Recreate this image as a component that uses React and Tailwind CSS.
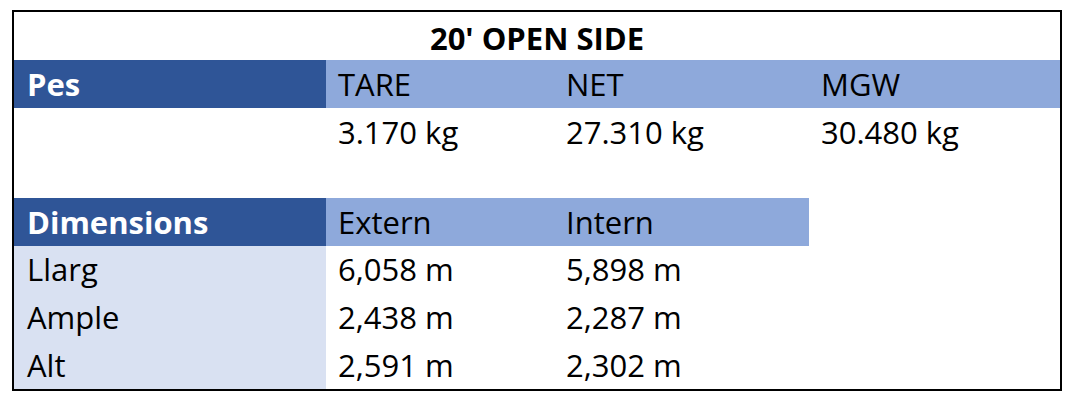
import React from 'react';

const font = { fontFamily: '"Open Sans", "Liberation Sans", sans-serif' };

const dims = [
  { label: 'Llarg', ext: '6,058 m', int: '5,898 m', h: 'h-[47px]' },
  { label: 'Ample', ext: '2,438 m', int: '2,287 m', h: 'h-[48px]' },
  { label: 'Alt', ext: '2,591 m', int: '2,302 m', h: 'h-[48px]' },
];

const Cell = ({ className = '', children }) => (
  <div className={`flex items-end pb-[8px] pl-[12px] text-[31px] leading-none text-black ${className}`}>
    {children}
  </div>
);

export default function App() {
  return (
    <div className="min-h-screen bg-white pt-[10px] pl-[12px]" style={font}>
      <div className="w-[1050px] border-2 border-black">
        <div className="flex h-[48px] items-end justify-center pb-[6px] text-[31px] font-bold leading-none text-black">
          20' OPEN SIDE
        </div>

        <div className="grid h-[48px] grid-cols-[312px_228px_255px_251px]">
          <Cell className="bg-[#2f5597] font-bold text-white pl-[13px]">Pes</Cell>
          <Cell className="bg-[#8ea9db]">TARE</Cell>
          <Cell className="bg-[#8ea9db]">NET</Cell>
          <Cell className="bg-[#8ea9db]">MGW</Cell>
        </div>

        <div className="grid h-[48px] grid-cols-[312px_228px_255px_251px]">
          <Cell />
          <Cell>3.170 kg</Cell>
          <Cell>27.310 kg</Cell>
          <Cell>30.480 kg</Cell>
        </div>

        <div className="h-[42px]" />

        <div className="grid h-[48px] grid-cols-[312px_228px_255px_251px]">
          <Cell className="bg-[#2f5597] font-bold text-white pl-[13px]">Dimensions</Cell>
          <Cell className="bg-[#8ea9db]">Extern</Cell>
          <Cell className="bg-[#8ea9db]">Intern</Cell>
          <Cell />
        </div>

        {dims.map((d) => (
          <div key={d.label} className={`grid ${d.h} grid-cols-[312px_228px_255px_251px]`}>
            <Cell className="bg-[#d9e1f2] pl-[13px]">{d.label}</Cell>
            <Cell>{d.ext}</Cell>
            <Cell>{d.int}</Cell>
            <Cell />
          </div>
        ))}
      </div>
    </div>
  );
}
